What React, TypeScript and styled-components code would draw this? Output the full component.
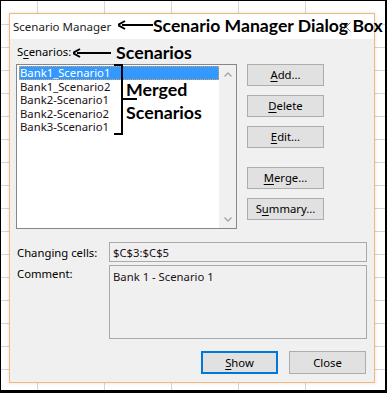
import React from "react";
import styled, { createGlobalStyle } from "styled-components";

const ui = `"Noto Sans", "Open Sans", sans-serif`;
const note = `Lato, "Noto Sans", sans-serif`;

const Global = createGlobalStyle`
  html, body { margin: 0; padding: 0; background: #fff; }
  body { font-family: ${ui}; }
  * { box-sizing: border-box; }
`;

const Frame = styled.div`
  position: relative;
  width: 387px;
  height: 393px;
  border-style: solid;
  border-color: #000;
  border-width: 1px 2px 3px 1px;
  padding: 12px 0 0 8px;
  background-color: #fff;
  background-image:
    repeating-linear-gradient(to right, transparent 0 66px, #d6d6d6 66px 67px),
    repeating-linear-gradient(to bottom, transparent 0 22px, #d6d6d6 22px 23px);
  background-position: -30px 0, 0 1px;
  overflow: hidden;
`;

const Dialog = styled.div`
  width: 366px;
  height: 370px;
  border: 1px solid #f1b77b;
  background: #f0f0f0;
  display: flex;
  flex-direction: column;
  box-shadow: 0 0 4px rgba(0, 0, 0, 0.12);
`;

const TitleBar = styled.div`
  height: 25px;
  background: #fff;
  display: flex;
  align-items: center;
  padding-left: 3px;
  font-size: 11.5px;
  color: #222;
`;

const CloseX = styled.svg`
  margin-left: auto;
  margin-right: 23px;
  margin-top: 1px;
`;

const Body = styled.div`
  flex: 1;
  display: flex;
  flex-direction: column;
  padding: 5px 7px 8px 6px;
  font-size: 11.3px;
  color: #000;
`;

const Top = styled.div`
  display: grid;
  grid-template-columns: 221px 77px;
  grid-template-rows: 15px 165px;
  column-gap: 10px;
  row-gap: 5px;
`;

const Label = styled.div<{ $top?: boolean }>`
  line-height: 15px;
  padding-left: 1px;
  white-space: nowrap;
  align-self: ${(p) => (p.$top ? "start" : "center")};
  padding-top: ${(p) => (p.$top ? "1px" : "0")};
`;

const U = styled.span`
  text-decoration: underline;
  text-underline-offset: 2px;
`;

const ListBox = styled.div`
  grid-column: 1;
  grid-row: 2;
  border: 1px solid #828790;
  background: #fff;
  display: flex;
`;

const Items = styled.div`
  flex: 1;
  padding: 1px 0 0 2px;
  display: flex;
  flex-direction: column;
`;

const Item = styled.div<{ $selected?: boolean }>`
  height: 13.5px;
  line-height: 13.5px;
  padding-left: 1px;
  white-space: nowrap;
  color: ${(p) => (p.$selected ? "#fff" : "#1a1016")};
  background: ${(p) => (p.$selected ? "#3399ff" : "transparent")};
  outline: ${(p) => (p.$selected ? "1px dotted #e8a050" : "none")};
  outline-offset: -1px;
`;

const ScrollBar = styled.div`
  width: 17px;
  background: #f0f0f0;
  display: flex;
  flex-direction: column;
  justify-content: space-between;
  align-items: center;
  padding: 7px 0 6px;
`;

const ButtonCol = styled.div`
  grid-column: 2;
  grid-row: 2;
  display: flex;
  flex-direction: column;
  gap: 9px;
`;

const Btn = styled.button<{ $default?: boolean; $gapBefore?: boolean }>`
  width: 77px;
  height: ${(p) => (p.$default !== undefined ? "23px" : "22px")};
  margin-top: ${(p) => (p.$gapBefore ? "10px" : "0")};
  background: #e1e1e1;
  border: ${(p) => (p.$default ? "2px solid #0078d7" : "1px solid #adadad")};
  font-family: ${ui};
  font-size: 11.3px;
  color: #000;
  padding: 0;
  display: flex;
  align-items: center;
  justify-content: center;
  line-height: 1;
`;

const Fields = styled.div`
  margin-top: 13px;
  display: grid;
  grid-template-columns: 93px 258px;
  grid-template-rows: 20px 74px;
  row-gap: 3px;
`;

const Field = styled.div<{ $pt?: number }>`
  border: 1px solid #a9a9a9;
  background: #f0f0f0;
  padding: ${(p) => p.$pt ?? 2}px 3px 0;
  line-height: 15px;
  color: #1a1016;
`;

const Footer = styled.div`
  margin-top: 12px;
  margin-right: 1px;
  display: flex;
  justify-content: flex-end;
  gap: 11px;
`;

const Note = styled.div<{ $size: number }>`
  position: absolute;
  font-family: ${note};
  font-weight: 700;
  font-size: ${(p) => p.$size}px;
  color: #000;
  white-space: nowrap;
  line-height: 1;
`;

const Arrow = styled.svg`
  position: absolute;
`;

const Bracket = styled.svg`
  position: absolute;
`;

const items = [
  "Bank1_Scenario1",
  "Bank1_Scenario2",
  "Bank2-Scenario1",
  "Bank2-Scenario2",
  "Bank3-Scenario1",
];

const ArrowLeft = ({ x, y, w }: { x: number; y: number; w: number }) => (
  <Arrow width={w} height={10} viewBox={`0 0 ${w} 10`} style={{ left: x, top: y }}>
    <line x1={4} y1={5} x2={w} y2={5} stroke="#000" strokeWidth={2} />
    <path d="M0 5 L7 1 M0 5 L7 9" stroke="#000" strokeWidth={2} fill="none" />
  </Arrow>
);

export default function App() {
  return (
    <>
      <Global />
      <Frame>
        <Dialog>
          <TitleBar>
            Scenario Manager
            <CloseX width={10} height={10} viewBox="0 0 10 10">
              <path d="M0.5 0.5 L9.5 9.5 M9.5 0.5 L0.5 9.5" stroke="#777" strokeWidth={1} />
            </CloseX>
          </TitleBar>
          <Body>
            <Top>
              <Label>
                S<U>c</U>enarios:
              </Label>
              <ListBox>
                <Items>
                  {items.map((t, i) => (
                    <Item key={t} $selected={i === 0}>
                      {t}
                    </Item>
                  ))}
                </Items>
                <ScrollBar>
                  <svg width={8} height={5} viewBox="0 0 8 5">
                    <path d="M0.5 4.5 L4 1 L7.5 4.5" stroke="#a6a6a6" strokeWidth={1.4} fill="none" />
                  </svg>
                  <svg width={8} height={5} viewBox="0 0 8 5">
                    <path d="M0.5 0.5 L4 4 L7.5 0.5" stroke="#a6a6a6" strokeWidth={1.4} fill="none" />
                  </svg>
                </ScrollBar>
              </ListBox>
              <ButtonCol>
                <Btn>
                  <U>A</U>dd...
                </Btn>
                <Btn>
                  <U>D</U>elete
                </Btn>
                <Btn>
                  <U>E</U>dit...
                </Btn>
                <Btn $gapBefore>
                  <U>M</U>erge...
                </Btn>
                <Btn>
                  S<U>u</U>mmary...
                </Btn>
              </ButtonCol>
            </Top>
            <Fields>
              <Label>Changing cells:</Label>
              <Field>$C$3:$C$5</Field>
              <Label $top>Comment:</Label>
              <Field $pt={3}>Bank 1 - Scenario 1</Field>
            </Fields>
            <Footer>
              <Btn $default>
                <U>S</U>how
              </Btn>
              <Btn $default={false}>Close</Btn>
            </Footer>
          </Body>
        </Dialog>

        <ArrowLeft x={117} y={19} w={35} />
        <Note $size={17.6} style={{ left: 152, top: 16 }}>
          Scenario Manager Dialog Box
        </Note>
        <ArrowLeft x={72} y={47} w={38} />
        <Note $size={17.8} style={{ left: 115, top: 43 }}>
          Scenarios
        </Note>
        <Bracket width={20} height={74} viewBox="0 0 20 74" style={{ left: 112, top: 63 }}>
          <path
            d="M1 1 H9 V35 M9 35 H24 M9 35 V70 H1"
            stroke="#000"
            strokeWidth={2}
            fill="none"
          />
        </Bracket>
        <Bracket width={17} height={4} viewBox="0 0 17 4" style={{ left: 120, top: 97 }}>
          <path d="M0 1 H16" stroke="#000" strokeWidth={2} fill="none" />
        </Bracket>
        <Note $size={17.8} style={{ left: 125, top: 80 }}>
          Merged
        </Note>
        <Note $size={17.8} style={{ left: 125, top: 103 }}>
          Scenarios
        </Note>
      </Frame>
    </>
  );
}
